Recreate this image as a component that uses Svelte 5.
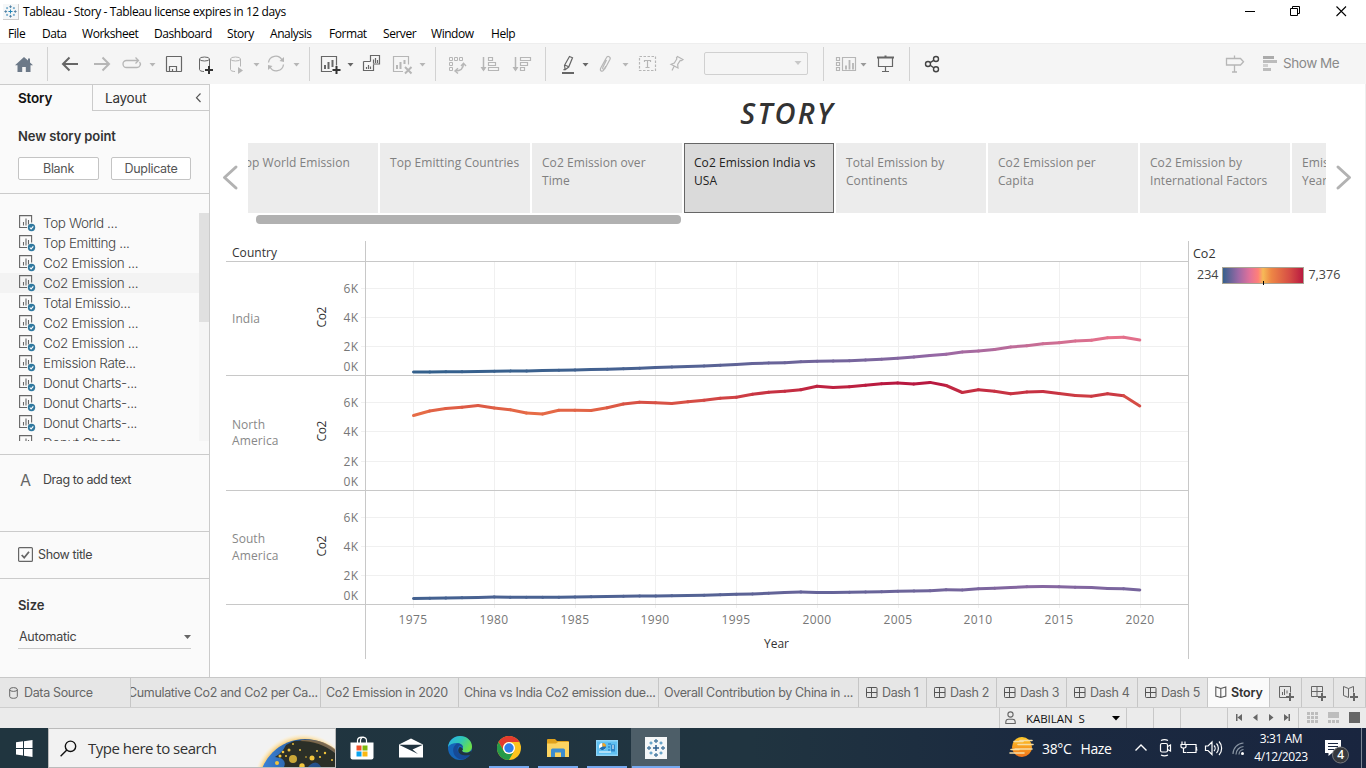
<script>
  const menus = [
    ['File', 34], ['Data', 40], ['Worksheet', 72], ['Dashboard', 73], ['Story', 43],
    ['Analysis', 59], ['Format', 54], ['Server', 48], ['Window', 60], ['Help', 40]
  ];

  const D = '#666';
  const L = '#b6b6b6';
  const drop = (x, c) => `<path d="M${x - 3} 63h6l-3 3.6z" fill="${c}"/>`;
  const g = (c, body, w = 1) => `<g fill="none" stroke="${c}" stroke-width="${w}">${body}</g>`;
  const cyl = (x) =>
    `<ellipse cx="${x + 5}" cy="59" rx="5" ry="2"/><path d="M${x} 59v10.500c0 1.200 2 2 4.500 2M${x + 10} 59v7.500"/>`;

  // every cell starts where the previous one ends; drawings use window coordinates
  const tools = [
    { x: 0, w: 47, art: '<path d="M24 57l-9 8.300h2.500V72h4.700v-5h3.600v5h4.700v-6.700H33l-3-2.800V58.500h-2v2z" fill="#6c7988"/>' },
    { x: 47, w: 39, sep: true, art: g(D, '<path d="M78 64H63.500M69.500 57.500L63 64l6.500 6.500"/>', 2) },
    { x: 86, w: 30, art: g(L, '<path d="M94 64h14.500M102.500 57.500L109 64l-6.500 6.500"/>', 2) },
    { x: 116, w: 43, art: g(L, '<path d="M129 60.500h-2.500a3.300 3.300 0 0 0 0 7h10.500a3.300 3.300 0 0 0 2.500-5.500M129 60.500h9M135.500 57.500l3 3-3 3"/>', 1.3) + drop(152.5, L) },
    { x: 159, w: 30, art: g(D, '<rect x="166.500" y="56.500" width="15" height="15" rx=".5"/><path d="M169.500 71.500v-5h7v5M172.500 71.500v-2.500"/>', 1.2) },
    { x: 189, w: 33, art: g(D, cyl(199.5)) + g('#333', '<path d="M209 66v8M205 70h8"/>', 2) },
    { x: 222, w: 42, art: g(L, cyl(230.5)) + `<path d="M238 67v7l5-3.500z" fill="${L}"/>` + drop(256.5, L) },
    { x: 264, w: 45, art: g(L, '<path d="M268.500 62.500a7.200 7.200 0 0 1 13.500-2.500M283.500 64.500a7.200 7.200 0 0 1-13.500 2.500"/>', 1.3) + `<path d="M284 57v5l-4.500-1zM268 70v-5l4.500 1z" fill="${L}"/>` + drop(296.5, L) },
    { x: 309, w: 46, sep: true, art: g(D, '<path d="M332 71.500h-10.500v-15h15v9"/>', 1.2) + g(D, '<path d="M325 65v4M328.500 62v7M332.500 60v7"/>', 2) + g('#333', '<path d="M336.500 66v8M332.500 70h8"/>', 2) + drop(350.5, D) },
    { x: 355, w: 31, art: g(D, '<path d="M370.500 61.500v-6h9v8.500h-6M363.500 61.500h7M363.500 61.500v9h10v-6M373.500 59.500v4M375.500 58v5M377.500 60v3M366.500 67v2M368.500 65v4M370.500 66.500v2.500"/>', 1.2) },
    { x: 386, w: 49, art: g(L, '<path d="M403 71.500h-9.500v-15h15v8"/>', 1.2) + g(L, '<path d="M397 65v4M400.500 62v7M404.500 60v4M405 67l6.500 6.500M411.500 67l-6.500 6.500"/>', 2) + drop(422.5, L) },
    { x: 435, w: 36, sep: true, art: g(L, '<path d="M449.500 57.500h3v3h-3zM454.500 57.500h3v3h-3zM459.500 57.500h3v3h-3zM449.500 62.500h3v3h-3zM449.500 67.500h3v3h-3z"/>') + g(L, '<path d="M455 71c5 0 8.500-2 8.500-7.500M461 66l2.500-2.800 2.500 2.800M458 68.300L455 71l3 2.500"/>', 1.4) },
    { x: 471, w: 34, art: g(L, '<path d="M488.500 57.500h4v3h-4zM488.500 62.500h7v3h-7zM488.500 67.500h10v3h-10z"/>', 1.2) + g(L, '<path d="M483.500 57v13"/>', 1.5) + `<path d="M480.500 67h6l-3 4.500z" fill="${L}"/>` },
    { x: 505, w: 40, art: g(L, '<path d="M520.500 57.500h10v3h-10zM520.500 62.500h7v3h-7zM520.500 67.500h4v3h-4z"/>', 1.2) + g(L, '<path d="M515.500 57v13"/>', 1.5) + `<path d="M512.500 67h6l-3 4.500z" fill="${L}"/>` },
    { x: 545, w: 45, sep: true, art: g(D, '<path d="M569.500 56.500l3 1.300-3.800 9.200-3.500 2.700-.7-4.400zM564.700 65l4 1.700M563.500 70l1.500-1"/>', 1.2) + '<path d="M562 72h12v2h-12z" fill="#666"/>' + drop(585.5, D) },
    { x: 590, w: 40, art: g(L, '<path d="M606.500 60l-3.700 7.500c-.7 1.700 1.200 2.700 2.100 1.200l5-9.200c1.300-2.600-2.200-4.300-3.500-1.800l-5.500 10c-1.600 3.400 1.200 4.500 2.700 2.400l2-3.500"/>', 1.2) + drop(625.5, L) },
    { x: 630, w: 32, art: g(L, '<rect x="639.500" y="56.500" width="16" height="14" stroke-dasharray="2.500 1.500"/><path d="M644.500 62v-1.500h6V62M647.500 60.500v7M645.500 67.500h4"/>', 1.2) },
    { x: 662, w: 42, art: g(L, '<path d="M677.500 56.500l5.500 3-1.500 1.200-1.300-.2-2.500 4 .3 3.500-7-3.700 3.300-1.300 2.500-4-.3-1.300zM674 66.500l-2 4"/>', 1.2) }
  ];
  const tools2 = [
    { x: 808, w: 15, art: '' },
    { x: 823, w: 46, sep: true, art: g(L, '<path d="M836.500 57.500h3v3h-3zM836.500 62.500h3v3h-3zM836.500 67.500h3v3h-3zM842.500 57.500h13v13h-13z"/>', 1.2) + g(L, '<path d="M846 65.500v4M849.500 60v9.500M853 63v6.500"/>', 1.8) + drop(863.5, '#999') },
    { x: 869, w: 40, art: g(D, '<path d="M878.500 58v8.500h14V58M885.500 66.500v4.500M882 71.500h7"/>', 1.2) + '<path d="M877 56.500h7.500V55.500h2v1h7.500v2h-17z" fill="#666"/>' },
    { x: 909, w: 46, sep: true, art: g('#444', '<circle cx="928" cy="64" r="2.500"/><circle cx="936" cy="59" r="2.500"/><circle cx="936" cy="69.300" r="2.500"/><path d="M930.200 62.600l3.500-2.200M930.200 65.300l3.500 2.500"/>', 1.4) }
  ];

  const points = ['Top World Emission', 'Top Emitting Countries', 'Co2 Emission over Time', 'Co2 Emission India vs USA', 'Total Emission by Continents', 'Co2 Emission per Capita', 'Co2 Emission by International Factors', 'Emission Rate\nYearly'];
  const sheets = ['Top World ...', 'Top Emitting ...', 'Co2 Emission ...', 'Co2 Emission ...', 'Total Emissio...', 'Co2 Emission ...', 'Co2 Emission ...', 'Emission Rate...', 'Donut Charts-...', 'Donut Charts-...', 'Donut Charts-...', 'Donut Charts-...'];

  const ramp = [
    [0, 0x33, 0x60, 0x8c], [0.167, 0x97, 0x68, 0xa5], [0.333, 0xe7, 0x71, 0x8a], [0.5, 0xf6, 0xba, 0x57],
    [0.667, 0xed, 0x78, 0x46], [0.833, 0xd5, 0x4c, 0x45], [1, 0xb8, 0x18, 0x40]
  ];
  function shade(v) {
    const t = Math.max(0, Math.min(1, (v - 234) / 7142));
    let i = 1;
    while (i < ramp.length - 1 && t > ramp[i][0]) i++;
    const a = ramp[i - 1], b = ramp[i];
    const k = (t - a[0]) / (b[0] - a[0]);
    return `rgb(${[1, 2, 3].map((n) => Math.round(a[n] + (b[n] - a[n]) * k)).join(',')})`;
  }

  const panes = [
    { names: ['India'], ny: [323], base: 375.5, ticks: [288.5, 317.5, 346.5], zero: 366.500,
      ys: [372, 371.900, 371.800, 371.700, 371.500, 371.300, 371.100, 370.900, 370.600, 370.300, 370, 369.600, 369.200, 368.700, 368.200, 367.600, 367, 366.400, 365.900, 365.300, 364.500, 363.500, 363, 362.700, 361.700, 361.200, 361.100, 360.700, 360.100, 359.200, 358.200, 357, 355.600, 354.200, 352, 351, 349.500, 347, 345.800, 343.800, 342.700, 341, 340.200, 337.800, 337.300, 340] },
    { names: ['North', 'America'], ny: [429, 445], base: 490.5, ticks: [402.5, 431.5, 461.5], zero: 481.500,
      ys: [415.500, 411, 408.500, 407.300, 405.600, 408, 409.800, 413, 414, 410.300, 410.200, 410.500, 407.800, 404, 402.200, 402.700, 403.500, 401.800, 400.300, 398.300, 397.300, 394.300, 392.300, 391.300, 389.800, 386.300, 387.600, 386.800, 385.300, 383.700, 383, 384, 382.400, 385.500, 392.500, 389.700, 391.200, 393.800, 392, 391.500, 393.500, 395.500, 396.200, 393.800, 395.700, 406] },
    { names: ['South', 'America'], ny: [543, 560], base: 604.5, ticks: [517.5, 546.5, 575.5], zero: 595.500,
      ys: [598.500, 598.300, 598.100, 597.800, 597.400, 597, 597.200, 597.300, 597.300, 597.200, 597, 596.700, 596.400, 596.200, 596.100, 596, 595.800, 595.600, 595.200, 594.800, 594.200, 593.900, 593.200, 592.500, 592, 592.500, 592.400, 592.200, 592, 591.800, 591.200, 591, 590.700, 589.800, 590, 588.700, 588.200, 587.500, 586.800, 586.600, 586.800, 587.300, 587.600, 588.400, 588.800, 590] }
  ];
  const years = [[1975, 413.5], [1980, 494.5], [1985, 575.5], [1990, 655.5], [1995, 736.5], [2000, 817.5], [2005, 898.5], [2010, 978.5], [2015, 1059.5], [2020, 1140.5]];
  const px = (i) => 413.5 + i * 16.14;
  function segments(p) {
    const out = [];
    for (let i = 0; i < p.ys.length - 1; i++) {
      const mid = (p.ys[i] + p.ys[i + 1]) / 2;
      out.push({ x1: px(i), y1: p.ys[i], x2: px(i + 1), y2: p.ys[i + 1], c: shade((p.base - mid) / 14.5 * 1000) });
    }
    return out;
  }

  const longTabs = [['Cumulative Co2 and Co2 per Ca...', 190, true], ['Co2 Emission in 2020', 138], ['China vs India Co2 emission due...', 200], ['Overall Contribution by China in ...', 200]];
  const dashTabs = [['Dash 1', 68], ['Dash 2', 70], ['Dash 3', 70], ['Dash 4', 71], ['Dash 5', 70]];
</script>

{#snippet toolrow(list)}
  {#each list as t}
    <svg class="tool" class:sep={t.sep} width={t.w} height="41" viewBox="{t.x} 43 {t.w} 41">{@html t.art}</svg>
  {/each}
{/snippet}

{#snippet spark(s, arms)}
  <svg width={s} height={s} viewBox="0 0 22 22" fill="none" stroke-width="1.3">
    <rect width="22" height="22" fill="#f5f7f8" />
    <path d="M11 8v6M8 11h6" stroke={arms} stroke-width="1.500" />
    <path d="M11 2v4M9 4h4M11 16v4M9 18h4M4 9v4M2 11h4M18 9v4M16 11h4" stroke="#4a7ba0" />
    <path d="M6 4.500v3M4.500 6h3M16 4.500v3M14.500 6h3M6 14.500v3M4.500 16h3M16 14.500v3M14.500 16h3" stroke="#5b9cc4" />
  </svg>
{/snippet}

<div class="screen">
  <header class="titlebar">
    <span class="logo">{@render spark(15, '#1f86b8')}</span>
    <span class="wtitle">Tableau - Story - Tableau license expires in 12 days</span>
    <svg class="winbtns" width="116" height="22" viewBox="1235 0 116 22" fill="none" stroke="#000">
      <path d="M1245 10.500h10" />
      <path d="M1290.500 7.500h7v7h-7zM1292.500 7.500v-2h7v7h-2" />
      <path d="M1336.500 5.500l9.500 9.500M1346 5.500l-9.500 9.500" stroke-width="1.100" />
    </svg>
  </header>
  <nav class="menubar">
    {#each menus as [m, w]}<span style:width="{w}px">{m}</span>{/each}
  </nav>

  <div class="toolbar">
    {@render toolrow(tools)}
    <div class="combo"><svg width="8" height="5" viewBox="0 0 8 5"><path d="M0.500 0h7l-3.500 4z" fill="#c8c8c8" /></svg></div>
    {@render toolrow(tools2)}
    <div class="showme">
      <svg width="60" height="41" viewBox="1223 43 60 41">
        <path d="M1226.500 58.500v6.500h14l3-3.200-3-3.300zM1234.500 55.500v3M1234.500 65v7M1232 72h5" fill="none" stroke="#b6b6b6" stroke-width="1.300" />
        <path d="M1263 56h11v3h-11z" fill="#ababab" /><path d="M1263 60h14v3h-14z" fill="#bcbcbc" />
        <path d="M1263 64h5v3h-5z" fill="#d0d0d0" /><path d="M1263 68h8v3h-8z" fill="#bcbcbc" />
      </svg>
      <span>Show Me</span>
    </div>
  </div>

  <main>
    <aside>
      <div class="ptabs">
        <div class="ptab on">Story</div>
        <div class="ptab off">Layout
          <svg width="7" height="10" viewBox="0 0 7 10"><path d="M5.500 .5L1.500 4.700l4 4.300" fill="none" stroke="#555" stroke-width="1.200" /></svg>
        </div>
      </div>
      <section class="newpoint">
        <h3>New story point</h3>
        <div class="btns"><button>Blank</button><button class="dup">Duplicate</button></div>
      </section>
      <section class="list">
        <div class="rows">
          {#each sheets as s, i}
            <div class="row" class:hot={i === 3}>
              <svg width="17" height="17" viewBox="0 0 17 17">
                <path d="M8 12.500H.6V.6h12v7" fill="none" stroke="#666" stroke-width="1.100" />
                <path d="M4.500 7v3.500M7 3.500v7M9.500 5v4.500" stroke="#666" stroke-width="1.100" />
                <circle cx="12.500" cy="12.500" r="3.700" fill="#31799f" />
                <path d="M10.800 12.500l1.300 1.400 2.200-2.600" fill="none" stroke="#fff" stroke-width="1.100" />
              </svg>
              <span>{s}</span>
            </div>
          {/each}
        </div>
        <div class="track"><div class="thumb"></div></div>
      </section>
      <section class="drag"><span class="biga">A</span><span>Drag to add text</span></section>
      <section class="showtitle">
        <svg width="15" height="15" viewBox="0 0 15 15" fill="none" stroke="#666"><rect x=".6" y=".6" width="13.800" height="13.800" rx="1" stroke-width="1.200" /><path d="M3.700 8l2.500 2.700 4.800-6" stroke-width="1.800" /></svg>
        <span>Show title</span>
      </section>
      <section class="size">
        <h3>Size</h3>
        <div class="select"><span>Automatic</span><svg width="7" height="4" viewBox="0 0 7 4"><path d="M0 0h7l-3.500 4z" fill="#666" /></svg></div>
      </section>
    </aside>

    <div class="canvas">
      <h1>STORY</h1>
      <div class="nav">
        <svg width="38" height="70" viewBox="210 143 38 70" fill="none" stroke="#b2b2b2" stroke-width="3" stroke-linecap="round" stroke-linejoin="round"><path d="M236 167l-11.500 10.500 11.500 10.500" /></svg>
        <div class="strip"><div class="points">
          {#each points as p, i}<div class="point" class:cur={i === 3}>{p}</div>{/each}
        </div></div>
        <svg width="39" height="70" viewBox="1326 143 39 70" fill="none" stroke="#b2b2b2" stroke-width="3" stroke-linecap="round" stroke-linejoin="round"><path d="M1338 167l11.500 10.500-11.500 10.500" /></svg>
      </div>
      <div class="hscroll"></div>
      <div class="viz">
        <svg class="plot" width="963" height="419" viewBox="226 240 963 419">
          <g stroke="#f0f0f0">
            {#each years as [, x]}<path d="M{x} 262V608" />{/each}
            {#each panes as p}{#each p.ticks as y}<path d="M361 {y}H1188" />{/each}{/each}
          </g>
          <g stroke="#c8c8c8">
            <path d="M226 261.500H1188M226 375.500H1188M226 490.500H1188M226 604.500H1188M365.500 241V659M1188.500 241V659" />
          </g>
          {#each panes as p}
            <g stroke-width="3" stroke-linecap="round">
              {#each segments(p) as s}<line x1={s.x1} y1={s.y1} x2={s.x2} y2={s.y2} stroke={s.c} />{/each}
            </g>
            <g class="lab">
              {#each p.names as n, i}
                <text x="232" y={p.ny[i]} textLength={n === 'India' ? 28 : n === 'America' ? 46.5 : 33}>{n}</text>
              {/each}
            </g>
            <g class="num">
              {#each p.ticks as y, i}<text x="343.500" y={y + 4.800} textLength="14.500">{6 - i * 2}K</text>{/each}
              <text x="343.500" y={p.zero + 4.800} textLength="14.500">0K</text>
            </g>
            <text class="axis" transform="translate(326 {p.ticks[1] + 10}) rotate(-90)" textLength="21">Co2</text>
          {/each}
          <g class="num">
            {#each years as [y, x]}<text x={x - 15} y="624" textLength="28.500">{y}</text>{/each}
          </g>
          <text class="axis" x="232" y="257" textLength="45">Country</text>
          <text class="axis" x="764" y="648" textLength="25">Year</text>
        </svg>
        <div class="legend">
          <div class="ltitle">Co2</div>
          <div class="lrow"><span>234</span>
            <svg width="82" height="18" viewBox="0 0 82 18">
              <defs><linearGradient id="heat">
                <stop offset="0" stop-color="#33608c" /><stop offset=".2" stop-color="#9f69a6" /><stop offset=".333" stop-color="#e0719a" />
                <stop offset=".44" stop-color="#ff8078" /><stop offset=".5" stop-color="#f6ba57" /><stop offset=".6" stop-color="#ee8745" />
                <stop offset=".833" stop-color="#d54c45" /><stop offset="1" stop-color="#b81840" />
              </linearGradient></defs>
              <rect x=".5" y=".5" width="81" height="16" fill="url(#heat)" stroke="#a9a494" />
              <path d="M41.500 14v4" stroke="#000" />
            </svg>
            <span>7,376</span></div>
        </div>
      </div>
    </div>
  </main>

  <div class="sheettabs">
    <div class="st ds">
      <svg width="9" height="12" viewBox="0 0 9 12" fill="none" stroke="#666"><ellipse cx="4.500" cy="2.500" rx="3.800" ry="1.900" /><path d="M.7 2.500v7c0 2.400 7.600 2.400 7.600 0v-7" /></svg>
      <span>Data Source</span>
    </div>
    {#each longTabs as [t, w, cut]}<div class="st long" class:cut style:width="{w}px"><span>{t}</span></div>{/each}
    {#each dashTabs as [t, w]}
      <div class="st dash" style:width="{w}px">
        <svg width="12" height="12" viewBox="0 0 12 12" fill="none" stroke="#555"><rect x=".5" y=".5" width="10.500" height="10" rx=".8" /><path d="M5.500 .5v10M.5 5.500h10.500" /></svg>
        <span>{t}</span>
      </div>
    {/each}
    <div class="st active">
      <svg width="12" height="13" viewBox="0 0 12 13" fill="none" stroke="#555" stroke-width="1.100"><path d="M5.800 2.500L.8 1v9l5 1.500 5-1.500V1zM5.800 2.500v9" /></svg>
      <span>Story</span>
    </div>
    <div class="st add"><svg width="32" height="29" viewBox="0 0 32 29" fill="none" stroke="#666"><path d="M16 19.500H9.500v-11h11v6M12.500 14v3M14.500 11v6M17 12.500v3" /><path d="M20 15v8M16 19h8" stroke-width="2" /></svg></div>
    <div class="st add"><svg width="32" height="29" viewBox="0 0 32 29" fill="none" stroke="#666"><path d="M16 18.500H9.500v-10h11v6M15 8.500v10M9.500 13.500h11" /><path d="M20 15v8M16 19h8" stroke-width="2" /></svg></div>
    <div class="st add"><svg width="32" height="29" viewBox="0 0 32 29" fill="none" stroke="#666"><path d="M14.500 10.500l-5-2v9l5 2V10.500l5-2v6" /><path d="M20 15v8M16 19h8" stroke-width="2" /></svg></div>
  </div>

  <div class="status">
    <div class="user">
      <svg width="12" height="14" viewBox="0 0 12 14" fill="none" stroke="#666" stroke-width="1.100"><circle cx="5.500" cy="3.500" r="2.600" /><path d="M.8 12.500v-1.500c0-1.800 1.200-2.800 2.700-2.800h4c1.500 0 2.700 1 2.700 2.800v1.500z" /></svg>
      <span>KABILAN&nbsp; S</span>
      <svg width="8" height="5" viewBox="0 0 8 5"><path d="M0 0h8l-4 4.500z" fill="#000" /></svg>
    </div>
    <div class="cell"></div><div class="cell"></div><div class="cell wide"></div>
    <svg width="70" height="20" viewBox="1228 708 70 20" fill="#666"><path d="M1236 714h1.500v7h-1.500zM1242 714v7l-4.500-3.500zM1257.500 714v7l-4.500-3.500zM1269 714v7l4.500-3.500zM1284 714v7l4.500-3.500zM1288.500 714h1.500v7h-1.500z" /></svg>
    <svg width="66" height="20" viewBox="1298 708 66 20"><path d="M1298.500 708v20" stroke="#c8c8c8" /><path d="M1307 712h3v3h-3zM1311 712h3v3h-3zM1315 712h3v3h-3zM1307 716h3v3h-3zM1311 716h3v3h-3zM1315 716h3v3h-3zM1307 720h3v3h-3zM1311 720h3v3h-3zM1315 720h3v3h-3zM1328 712h11v6h-11zM1328 720h3v3h-3zM1332 720h3v3h-3zM1336 720h3v3h-3z" fill="#bdbdbd" /><path d="M1349 712h11v11h-11z" fill="#666" /></svg>
  </div>

  <footer class="taskbar">
    <div class="start"><svg width="17" height="17" viewBox="0 0 17 17" fill="#fff"><path d="M0 2.300l7-1V8H0zM8 1.200L16.500 0v8H8zM0 9h7v6.500l-7-1zM8 9h8.500v8L8 15.700z" /></svg></div>
    <div class="search">
      <svg width="17" height="17" viewBox="0 0 17 17" fill="none" stroke="#111" stroke-width="1.400"><circle cx="10.500" cy="6.300" r="5.200" /><path d="M6.800 10L.6 16.200" /></svg>
      <span>Type here to search</span>
      <svg class="globe" width="78" height="38" viewBox="258 729 78 38">
        <defs>
          <radialGradient id="halo"><stop offset=".84" stop-color="#f3c064" /><stop offset=".9" stop-color="#f8d58c" /><stop offset="1" stop-color="#fff3d6" stop-opacity=".2" /></radialGradient>
          <linearGradient id="sea"><stop offset="0" stop-color="#3b86dd" /><stop offset=".5" stop-color="#255695" /><stop offset="1" stop-color="#1b3c6b" /></linearGradient>
        </defs>
        <circle cx="304" cy="783" r="49" fill="url(#halo)" />
        <circle cx="306" cy="785" r="46" fill="url(#sea)" />
        <path d="M276 757c5-3 8-6 11-12l8-4c14-2 28 1 41 12v14h-14c-3-6-8-6-13 0h-24c2-4 0-8-4-9z" fill="#2b2f27" />
        <path d="M301 741c13 0 25 4 35 12v-4c-9-7-20-10-33-9z" fill="#8f6f45" opacity=".8" />
        <g fill="#f2c53d"><circle cx="294" cy="759" r="4" opacity=".8" /><circle cx="313" cy="758" r="2.500" /><circle cx="303" cy="766" r="2.700" /><circle cx="278" cy="763" r="2" />
          <circle cx="284" cy="752" r="1.300" /><circle cx="290" cy="750" r="1.500" /><circle cx="281" cy="756" r="1.500" /><circle cx="301" cy="750" r="1" /><circle cx="318" cy="751" r="1" /><circle cx="326" cy="753" r="1.200" /><circle cx="333" cy="760" r="1" /><circle cx="321" cy="757" r="1.100" /><circle cx="287" cy="756" r="1" /><circle cx="294" cy="744" r=".9" /><circle cx="307" cy="757" r=".8" /></g>
      </svg>
    </div>
    <div class="apps">
      <div class="app"><svg width="24" height="24" viewBox="0 0 24 24"><path d="M7.500 7V4.500c0-4.500 9-4.500 9 0V7M10.500 7V4.500c0-2 1.500-3.500 3-3.500" fill="none" stroke="#fff" stroke-width="1.200" /><path d="M.5 6.500h23v15a2 2 0 0 1-2 2h-19a2 2 0 0 1-2-2z" fill="#fff" /><path d="M6.500 9.500h5v5h-5z" fill="#f0512b" /><path d="M12.500 9.500h5v5h-5z" fill="#7fb80f" /><path d="M6.500 15.500h5v5h-5z" fill="#0aa3ee" /><path d="M12.500 15.500h5v5h-5z" fill="#fbb813" /></svg></div>
      <div class="app"><svg width="24" height="20" viewBox="0 0 24 20"><path d="M0 6.500L12 .5l12 6V19.500H0z" fill="#fff" /><path d="M0 6.800h24L13.500 11.500 19 16z" fill="#20333f" /></svg></div>
      <div class="app"><svg width="24" height="24" viewBox="0 0 24 24">
        <defs><linearGradient id="eg" x1="0" y1="0" x2="1" y2=".5"><stop offset="0" stop-color="#2ab0ef" /><stop offset=".55" stop-color="#30c7b4" /><stop offset="1" stop-color="#6be04a" /></linearGradient></defs>
        <circle cx="12" cy="12" r="12" fill="#1565b8" />
        <path d="M0 11C1 4 6 0 12 0c7 0 12 5 12 10.500 0 4-3 6-6 6-2.500 0-4-1-4-2 0-.8 1-1.200 1-3 0-2-2-4.500-6-4.500C5 7 1.500 8.500 0 11z" fill="url(#eg)" />
        <path d="M9 7.500c-3 2-4.500 5-3.500 9 1 4 4 6.500 8 7 4-.3 7-2.500 8.500-5-4 2-10 1-12-3-1-2-.5-4.500 1.500-6 1 .3 3 .8 3.500 2C15 9 12 7 9 7.500z" fill="#164a96" />
        <path d="M14 14.500c0 1.200 1.500 2.300 4 2.300 2 0 4-.9 5.500-2.300v3.500l-2 1c-3 1-9.600.5-11-3-.7-2 0-4 1.200-5 2 .2 3.200 1.500 3.200 2.500s-.9.500-.9 1z" fill="#20343f" />
      </svg></div>
      <div class="app run"><svg width="24" height="24" viewBox="0 0 24 24"><circle cx="12" cy="12" r="12" fill="#fcc31e" /><path d="M1.600 6A12 12 0 0 1 22.400 6H12a6 6 0 0 0-5.200 9z" fill="#e33b2e" /><path d="M1.600 6A12 12 0 0 0 12 24l5.200-9A6 6 0 0 1 6.800 15z" fill="#269a48" /><circle cx="12" cy="12" r="6" fill="#fff" /><circle cx="12" cy="12" r="4.700" fill="#2f7de9" /></svg></div>
      <div class="app run"><svg width="22" height="18" viewBox="0 0 22 18"><path d="M0 1a1 1 0 0 1 1-1h7l2 2h11a1 1 0 0 1 1 1v15H0z" fill="#e0a21c" /><path d="M0 4.500h9l2-1.500h11v15H0z" fill="#fcd461" /><path d="M4 18v-7a1.500 1.500 0 0 1 1.500-1.500h11A1.500 1.500 0 0 1 18 11v7h-4v-4.500H8V18z" fill="#3d8dd0" /></svg></div>
      <div class="app run"><svg width="22" height="16" viewBox="0 0 22 16"><path d="M0 0h22v16H0z" fill="#8ed4f7" /><path d="M1 1.500h20v13H1z" fill="#5fc0f1" /><circle cx="6.500" cy="6.500" r="3.500" fill="#fff" /><path d="M6.500 6.500V3a3.500 3.500 0 1 1-3 5.200z" fill="#1c6fb5" /><path d="M6.500 6.500V3a3.500 3.500 0 0 1 3.500 3.500z" fill="#f5a623" /><path d="M12 4h3M12 7h2M12 10h2" stroke="#1c6fb5" /><path d="M15 4.500h4v7h-4z" fill="#2f86c8" /><path d="M16 6h2M16 8h2" stroke="#fff" /><path d="M3 12h12" stroke="#fff" /></svg></div>
      <div class="app run sel">{@render spark(22, '#2d5f8e')}</div>
    </div>
    <div class="weather">
      <svg width="26" height="22" viewBox="1009 736 26 22"><defs><linearGradient id="sun" x1="0" y1="0" x2="0" y2="1"><stop offset="0" stop-color="#ffc928" /><stop offset="1" stop-color="#f0731a" /></linearGradient></defs><circle cx="1022" cy="746" r="10" fill="url(#sun)" /><path d="M1014 740.500h9M1020 739.500h12M1018 743.500h15M1011 748.500h8M1015 748h17M1010 752h14" stroke="#f7dda2" stroke-width="1.600" stroke-linecap="round" /></svg>
      <span class="deg">38°C</span><span>Haze</span>
    </div>
    <svg class="tray" width="118" height="40" viewBox="1130 728 118 40" fill="none" stroke="#fff" stroke-width="1.200">
      <path d="M1135.500 750.500l5.500-5.500 5.500 5.500" stroke-width="1.400" />
      <rect x="1160.500" y="743.500" width="7" height="8.500" rx="1.500" /><path d="M1167.500 746.500l3-1.500v6l-3-1.500M1161 740.500c2-1 5-1 7 0M1161 755c2 1 5 1 7 0" />
      <path d="M1186 744.500h10v8h-9M1196.500 747v3h1M1182 741.500v3M1185 741.500v3M1181 744.500h5v2c0 2-5 2-5 0zM1183.500 748.500v4h3" />
      <path d="M1205.500 746h2.500l4-4v12.500l-4-4h-2.500zM1214 745.500c1.500 1.500 1.500 4 0 5.500M1216.500 743.500c2.500 2.500 2.500 7 0 9.500M1219 741.500c3.500 3.500 3.500 10 0 13.500" />
      <g stroke="#8995a3"><path d="M1233 754a11 11 0 0 1 10.500-11M1236 754.500a8 8 0 0 1 7.500-8M1239 754.500a5 5 0 0 1 4.500-5" /></g><circle cx="1242.500" cy="753.500" r="1.500" fill="#fff" stroke="none" />
    </svg>
    <div class="clock"><span>3:31 AM</span><span>4/12/2023</span></div>
    <svg class="notif" width="54" height="40" viewBox="1312 728 54 40"><path d="M1325 740h16v13h-9l-3.500 3v-3h-3.500z" fill="#fff" /><path d="M1328 743.500h10M1328 746.500h10M1328 749.500h6" stroke="#1a2740" /><circle cx="1340.500" cy="755" r="8" fill="#37393d" stroke="#77797d" /><text x="1337.300" y="759.300">4</text><path d="M1361.500 728v40" stroke="#7c8594" /></svg>
  </footer>
</div>

<style>
  :global(body) { margin: 0; overflow: hidden; }
  * { box-sizing: border-box; }
  svg { display: block; flex: none; }
  .screen { width: 1366px; height: 768px; display: flex; flex-direction: column; background: #fff; font-family: 'Open Sans', 'Noto Sans', sans-serif; color: #000; white-space: nowrap; overflow: hidden; }
  .titlebar { height: 23px; display: flex; align-items: center; padding-left: 3px; font-size: 12px; }
  .logo { border: 1px solid #ccc; border-left: 0; border-top: 0; }
  .wtitle { margin-left: 4px; letter-spacing: -0.38px; flex: 1; }
  .winbtns { margin-right: 15px; }
  .menubar { height: 20px; display: flex; align-items: center; padding-left: 8px; font-size: 12px; letter-spacing: -0.45px; }
  .menubar span { flex: none; }
  .toolbar { height: 41px; display: flex; background: #f5f5f5; border-top: 1px solid #eee; }
  .tool { margin-top: -1px; }
  .tool.sep { background: linear-gradient(#d2d2d2, #d2d2d2) left 4px / 1px 34px no-repeat; }
  .combo { width: 104px; height: 23px; margin-top: 8px; border: 1px solid #d0d0d0; border-radius: 2px; display: flex; align-items: center; justify-content: flex-end; padding-right: 5px; }
  .showme { margin: -1px 0 0 auto; display: flex; align-items: center; color: #8a8a8a; font: 13.500px Inter, sans-serif; letter-spacing: -0.45px; }
  .showme span { width: 83px; padding-bottom: 1px; }

  main { height: 593px; display: flex; }
  aside { width: 210px; border-right: 1px solid #cbcbcb; background: #fafafa; color: #444; font-family: Inter, sans-serif; display: flex; flex-direction: column; }
  .ptabs { display: flex; height: 27px; border-top: 1px solid #cbcbcb; }
  .ptab { display: flex; align-items: center; }
  .on { width: 92px; padding-left: 18px; font-weight: 600; font-size: 13.500px; color: #111; letter-spacing: -0.2px; }
  .off { flex: 1; border-left: 1px solid #cbcbcb; border-bottom: 1px solid #cbcbcb; padding: 0 7px 0 12px; justify-content: space-between; color: #333; font-size: 13.500px; letter-spacing: -0.25px; }
  h3 { margin: 0; font-size: 13px; line-height: 16px; font-weight: 600; color: #333; letter-spacing: -0.1px; }
  .newpoint { height: 83px; border-bottom: 1px solid #cbcbcb; padding: 17px 18px 0; }
  .btns { display: flex; justify-content: space-between; margin-top: 13px; }
  button { width: 81px; height: 23px; background: #fff; border: 1px solid #c4c4c4; border-radius: 2px; padding: 0 0 1px; color: #555; font: 12.500px Inter, sans-serif; letter-spacing: -0.3px; }
  .dup { width: 80px; }
  .list { height: 261px; border-bottom: 1px solid #cbcbcb; display: flex; padding-top: 19px; }
  .rows { width: 199px; height: 228px; overflow: hidden; }
  .row { height: 20px; display: flex; align-items: center; padding-left: 19px; font-size: 13.500px; font-weight: 300; letter-spacing: -0.38px; }
  .row svg { margin-top: 1px; }
  .row span { margin-left: 7px; }
  .hot { background: #f3f3f3; }
  .track { width: 10px; height: 228px; background: #f5f5f5; }
  .thumb { height: 109px; background: #e0e0e0; }
  .drag { height: 77px; border-bottom: 1px solid #cbcbcb; display: flex; padding: 16px 0 0 20px; font-size: 12.500px; line-height: 18px; letter-spacing: -0.43px; }
  .biga { width: 23px; font-size: 16px; color: #666; }
  .showtitle { height: 47px; border-bottom: 1px solid #cbcbcb; display: flex; align-items: center; gap: 5px; padding: 0 0 1px 18px; font-size: 12.500px; letter-spacing: -0.38px; }
  .size { padding: 18px 18px 0; }
  .select { display: flex; align-items: center; justify-content: space-between; margin-top: 11px; height: 25px; border-bottom: 1px solid #cbcbcb; padding: 1px 0 0 1px; font-size: 12.500px; letter-spacing: -0.25px; }

  .canvas { flex: 1; width: 1156px; border-right: 1px solid #eee; }
  h1 { margin: 0; height: 59px; line-height: 58px; text-align: center; font-size: 29px; font-style: italic; font-weight: 600; color: #333; letter-spacing: 2.200px; }
  .nav { display: flex; height: 70px; }
  .strip { width: 1078px; flex: none; overflow: hidden; }
  .points { display: flex; gap: 2px; margin-left: -20px; width: 1300px; }
  .point { width: 150px; height: 70px; flex: none; background: #ececec; padding: 11px 8px 0 10px; white-space: pre-line; font-size: 12px; line-height: 18px; color: #808080; letter-spacing: 0.06px; }
  .cur { background: #dadada; border: 1px solid #666; padding: 10px 7px 0 9px; color: #222; }
  .hscroll { width: 425px; height: 9px; margin: 2px 0 0 46px; border-radius: 4px; background: #b1b1b1; }
  .viz { display: flex; margin: 16px 0 0 16px; }
  .lab, .num { font-size: 12px; fill: #888; }
  .num { fill: #777; }
  .axis { font-size: 12px; fill: #333; font-weight: 500; }
  .legend { margin-left: 4px; padding-top: 5px; font-size: 12.500px; color: #333; }
  .ltitle { line-height: 18px; }
  .lrow { display: flex; gap: 4px; height: 18px; margin-top: 4px; padding-left: 4px; color: #444; line-height: 16px; }

  .sheettabs { height: 31px; display: flex; background: #e6e6e6; border-top: 1px solid #c8c8c8; border-bottom: 1px solid #cecece; font: 12.500px Inter, sans-serif; letter-spacing: -0.35px; color: #666; }
  .st { flex: none; display: flex; align-items: center; height: 29px; border-right: 1px solid #c6c6c6; }
  .ds { width: 131px; padding-left: 9px; gap: 6px; }
  .long { padding-left: 5px; overflow: hidden; }
  .cut { padding-left: 0; }
  .cut span { margin-left: -3px; }
  .dash { padding-left: 7px; gap: 4px; }
  .active { width: 62px; background: #fafafa; color: #333; font-weight: 600; padding-left: 7px; gap: 4px; letter-spacing: -0.15px; }
  .add { width: 32px; }
  .status { height: 20px; display: flex; background: #ebebeb; color: #111; font: 12px 'Open Sans', sans-serif; }
  .user { margin-left: 999px; width: 128px; border: solid #c8c8c8; border-width: 0 1px; display: flex; align-items: center; padding-left: 5px; }
  .user span { margin-left: 9px; width: 86px; font-size: 11.500px; letter-spacing: -0.05px; }
  .cell { width: 27px; border-right: 1px solid #c8c8c8; }
  .wide { width: 47px; }

  .taskbar { height: 40px; display: flex; background: linear-gradient(90deg, #20353f, #203440 55%, #1b2a40 75%, #19253f); color: #fff; }
  .start { width: 48px; display: flex; align-items: center; justify-content: center; }
  .search { width: 288px; height: 40px; background: #f2f2f2; border: 1px solid #bbb; display: flex; align-items: center; padding-left: 11px; color: #333; font-size: 15px; letter-spacing: -0.5px; }
  .search > span { margin-left: 11px; width: 170px; }
  .apps { display: flex; margin-left: 1px; }
  .app { width: 49px; display: flex; align-items: center; justify-content: center; }
  .run { background: linear-gradient(#76a9f0, #76a9f0) center bottom / 40px 2px no-repeat; }
  .sel { background: linear-gradient(#76a9f0, #76a9f0) center bottom / 48px 2px no-repeat, #4d5e68; }
  .weather { display: flex; align-items: center; margin-left: 329px; width: 121px; font-size: 14px; letter-spacing: -0.35px; }
  .deg { margin: 0 9px 0 7px; }
  .clock { width: 64px; display: flex; flex-direction: column; align-items: center; font-size: 12px; line-height: 18px; padding: 2px 0 0 2px; letter-spacing: -0.38px; }
  .notif text { font: 600 12px 'Open Sans', sans-serif; fill: #fff; }
</style>
